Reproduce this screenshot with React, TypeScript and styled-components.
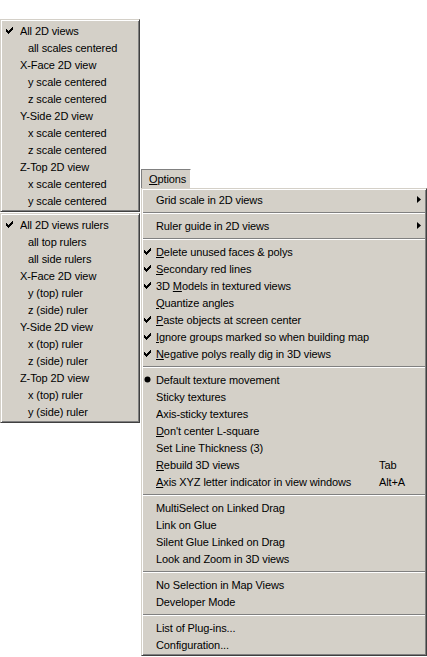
import React from 'react'
import styled, { createGlobalStyle } from 'styled-components'

const Global = createGlobalStyle`
  html, body {
    margin: 0;
    padding: 0;
    background: #fff;
  }
  body {
    font-family: 'Liberation Sans', Arial, sans-serif;
    font-size: 11px;
    color: #000;
  }
`

const Page = styled.div`
  display: flex;
  align-items: flex-start;
  width: 427px;
  height: 657px;
  overflow: hidden;
`

const LeftCol = styled.div`
  display: flex;
  flex-direction: column;
  gap: 1px;
  padding-top: 19px;
  width: 140px;
`

const RightCol = styled.div`
  display: flex;
  flex-direction: column;
  align-items: flex-start;
  margin-left: 1px;
  padding-top: 169px;
  width: 286px;
`

const MenuBarItem = styled.div`
  box-sizing: border-box;
  width: 50px;
  height: 19px;
  padding-left: 7px;
  line-height: 19px;
  background: #d4d0c8;
  border-top: 1px solid #808080;
  border-left: 1px solid #808080;
  border-right: 1px solid #fff;
  letter-spacing: -0.1px;
`

const Menu = styled.div<{ $width: number }>`
  box-sizing: border-box;
  width: ${(p) => p.$width}px;
  background: #d4d0c8;
  border: 1px solid;
  border-color: #d4d0c8 #404040 #404040 #d4d0c8;
  box-shadow: inset 1px 1px #fff, inset -1px -1px #808080;
  padding: 2px 1px;
`

const Row = styled.div<{ $cols: string }>`
  display: grid;
  grid-template-columns: ${(p) => p.$cols};
  align-items: center;
  height: 17px;
  white-space: nowrap;
  letter-spacing: -0.1px;
`

const Mark = styled.div<{ $pad: number }>`
  display: flex;
  align-items: center;
  padding-left: ${(p) => p.$pad}px;
  height: 17px;
`

const Label = styled.div<{ $indent?: boolean }>`
  padding-left: ${(p) => (p.$indent ? 8 : 0)}px;
  overflow: hidden;
`

const Accel = styled.span`
  text-decoration: underline;
  text-underline-offset: 1px;
`

const Shortcut = styled.div``

const Arrow = styled.div`
  display: flex;
  align-items: center;
  padding-left: 5px;
`

const Separator = styled.div`
  height: 9px;
  display: flex;
  flex-direction: column;
  justify-content: center;
  &::before {
    content: '';
    height: 1px;
    background: #808080;
  }
  &::after {
    content: '';
    height: 1px;
    background: #fff;
  }
`

type Item =
  | 'sep'
  | {
      label: string
      u?: number
      mark?: 'check' | 'radio'
      indent?: boolean
      shortcut?: string
      sub?: boolean
    }

const CheckIcon = () => (
  <svg width="7" height="7" viewBox="0 0 7 7" shapeRendering="crispEdges">
    <rect x="6" y="0" width="1" height="1" />
    <rect x="5" y="1" width="2" height="1" />
    <rect x="0" y="2" width="1" height="1" />
    <rect x="4" y="2" width="3" height="1" />
    <rect x="0" y="3" width="2" height="1" />
    <rect x="3" y="3" width="3" height="1" />
    <rect x="0" y="4" width="5" height="1" />
    <rect x="1" y="5" width="3" height="1" />
    <rect x="2" y="6" width="1" height="1" />
  </svg>
)

const RadioIcon = () => (
  <svg width="7" height="7" viewBox="0 0 7 7">
    <circle cx="3.5" cy="3.5" r="3" />
  </svg>
)

const SubArrow = () => (
  <svg width="4" height="7" viewBox="0 0 4 7">
    <polygon points="0,0 4,3.5 0,7" />
  </svg>
)

const renderLabel = (label: string, u?: number) => {
  if (u === undefined) return label
  return (
    <>
      {label.slice(0, u)}
      <Accel>{label[u]}</Accel>
      {label.slice(u + 1)}
    </>
  )
}

const viewItems: Item[] = [
  { label: 'All 2D views', mark: 'check' },
  { label: 'all scales centered', indent: true },
  { label: 'X-Face 2D view' },
  { label: 'y scale centered', indent: true },
  { label: 'z scale centered', indent: true },
  { label: 'Y-Side 2D view' },
  { label: 'x scale centered', indent: true },
  { label: 'z scale centered', indent: true },
  { label: 'Z-Top 2D view' },
  { label: 'x scale centered', indent: true },
  { label: 'y scale centered', indent: true },
]

const rulerItems: Item[] = [
  { label: 'All 2D views rulers', mark: 'check' },
  { label: 'all top rulers', indent: true },
  { label: 'all side rulers', indent: true },
  { label: 'X-Face 2D view' },
  { label: 'y (top) ruler', indent: true },
  { label: 'z (side) ruler', indent: true },
  { label: 'Y-Side 2D view' },
  { label: 'x (top) ruler', indent: true },
  { label: 'z (side) ruler', indent: true },
  { label: 'Z-Top 2D view' },
  { label: 'x (top) ruler', indent: true },
  { label: 'y (side) ruler', indent: true },
]

const optionItems: Item[] = [
  { label: 'Grid scale in 2D views', sub: true },
  'sep',
  { label: 'Ruler guide in 2D views', sub: true },
  'sep',
  { label: 'Delete unused faces & polys', u: 0, mark: 'check' },
  { label: 'Secondary red lines', u: 0, mark: 'check' },
  { label: '3D Models in textured views', u: 3, mark: 'check' },
  { label: 'Quantize angles', u: 0 },
  { label: 'Paste objects at screen center', u: 0, mark: 'check' },
  { label: 'Ignore groups marked so when building map', u: 0, mark: 'check' },
  { label: 'Negative polys really dig in 3D views', u: 0, mark: 'check' },
  'sep',
  { label: 'Default texture movement', mark: 'radio' },
  { label: 'Sticky textures' },
  { label: 'Axis-sticky textures' },
  { label: "Don't center L-square", u: 0 },
  { label: 'Set Line Thickness (3)' },
  { label: 'Rebuild 3D views', u: 0, shortcut: 'Tab' },
  { label: 'Axis XYZ letter indicator in view windows', u: 0, shortcut: 'Alt+A' },
  'sep',
  { label: 'MultiSelect on Linked Drag' },
  { label: 'Link on Glue' },
  { label: 'Silent Glue Linked on Drag' },
  { label: 'Look and Zoom in 3D views' },
  'sep',
  { label: 'No Selection in Map Views' },
  { label: 'Developer Mode' },
  'sep',
  { label: 'List of Plug-ins...' },
  { label: 'Configuration...' },
]

interface PopupProps {
  items: Item[]
  width: number
  cols: string
  markPad: number
}

const Popup = ({ items, width, cols, markPad }: PopupProps) => (
  <Menu $width={width}>
    {items.map((it, i) =>
      it === 'sep' ? (
        <Separator key={i} />
      ) : (
        <Row key={i} $cols={cols}>
          <Mark $pad={markPad}>
            {it.mark === 'check' && <CheckIcon />}
            {it.mark === 'radio' && <RadioIcon />}
          </Mark>
          <Label $indent={it.indent}>{renderLabel(it.label, it.u)}</Label>
          <Shortcut>{it.shortcut}</Shortcut>
          <Arrow>{it.sub && <SubArrow />}</Arrow>
        </Row>
      )
    )}
  </Menu>
)

const App = () => (
  <>
    <Global />
    <Page>
      <LeftCol>
        <Popup items={viewItems} width={140} cols="18px 1fr 0px 4px" markPad={4} />
        <Popup items={rulerItems} width={140} cols="18px 1fr 0px 4px" markPad={4} />
      </LeftCol>
      <RightCol>
        <MenuBarItem>
          <Accel>O</Accel>ptions
        </MenuBarItem>
        <Popup items={optionItems} width={286} cols="13px 1fr 33px 13px" markPad={1} />
      </RightCol>
    </Page>
  </>
)

export default App
